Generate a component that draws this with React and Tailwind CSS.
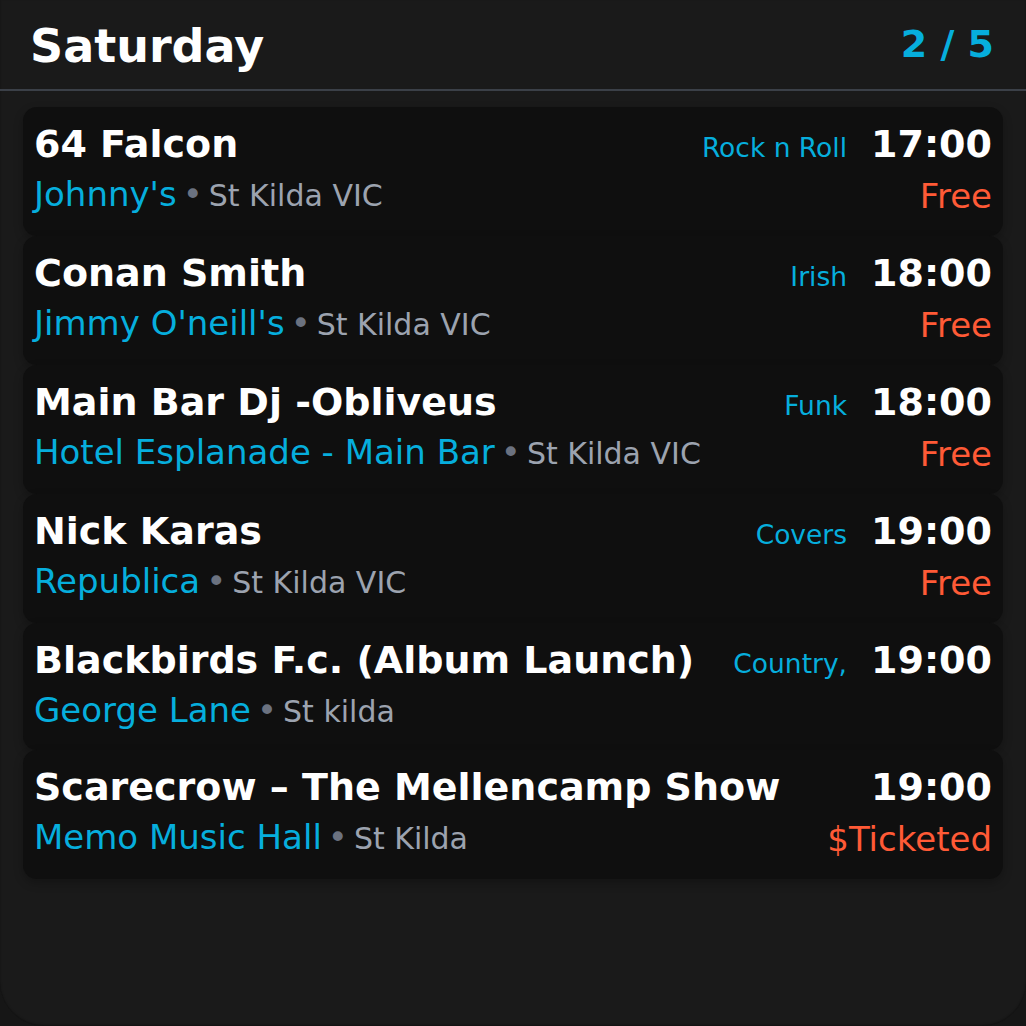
import React from 'react';

const gigs = [
  { title: '64 Falcon', venue: "Johnny's", suburb: 'St Kilda VIC', genre: 'Rock n Roll', time: '17:00', price: 'Free' },
  { title: 'Conan Smith', venue: "Jimmy O'neill's", suburb: 'St Kilda VIC', genre: 'Irish', time: '18:00', price: 'Free' },
  { title: 'Main Bar Dj -Obliveus', venue: 'Hotel Esplanade - Main Bar', suburb: 'St Kilda VIC', genre: 'Funk', time: '18:00', price: 'Free' },
  { title: 'Nick Karas', venue: 'Republica', suburb: 'St Kilda VIC', genre: 'Covers', time: '19:00', price: 'Free' },
  { title: 'Blackbirds F.c. (Album Launch)', venue: 'George Lane', suburb: 'St kilda', genre: 'Country,', time: '19:00' },
  { title: 'Scarecrow – The Mellencamp Show', venue: 'Memo Music Hall', suburb: 'St Kilda', time: '19:00', price: '$Ticketed' },
];

function GigCard({ gig }) {
  return (
    <div className="flex items-start justify-between bg-[#0f0f0f] rounded-[14px] pl-[11px] pr-[11px] pt-[18px] pb-[23px] shadow-[0_4px_10px_rgba(0,0,0,0.25)]">
      {/* Left */}
      <div className="min-w-0">
        <p className="text-[38px] leading-none font-bold text-white whitespace-nowrap">{gig.title}</p>
        <p className="mt-[14px] text-[34px] leading-none whitespace-nowrap">
          <span className="text-[#06aedd]">{gig.venue}</span>
          <span className="text-[#6b7280] ml-[6px] mr-[6px]">•</span>
          <span className="text-[30px] text-[#9ca3af]">{gig.suburb}</span>
        </p>
      </div>

      {/* Right */}
      <div className="flex flex-col items-end shrink-0">
        <div className="flex items-baseline gap-6">
          {gig.genre && <span className="text-[26.5px] leading-none text-[#06aedd]">{gig.genre}</span>}
          <span className="text-[38px] leading-none font-bold text-white">{gig.time}</span>
        </div>
        {gig.price && (
          <p className="mt-[16px] text-[34px] leading-none text-[#ff5a36] whitespace-nowrap">{gig.price}</p>
        )}
      </div>
    </div>
  );
}

export default function App() {
  return (
    <div className="w-[1026px] h-[1026px] bg-[#161616] font-['DejaVu_Sans',sans-serif] overflow-hidden">
      <div className="h-full bg-[#1a1a1a] rounded-b-[44px] shadow-[inset_0_-1px_2px_rgba(0,0,0,0.35)]">
        {/* Header */}
        <div className="flex items-start justify-between pl-[30px] pr-[32px] pt-[23px] pb-[20px] border-b-2 border-[#3b4048]">
          <h1 className="text-[46px] leading-none font-bold text-white">Saturday</h1>
          <span className="mt-[2px] text-[38px] leading-none font-bold text-[#06aedd]">2 / 5</span>
        </div>

        {/* List */}
        <div className="px-[23px] pt-[16px] flex flex-col">
          {gigs.map((gig, i) => (
            <GigCard key={i} gig={gig} />
          ))}
        </div>
      </div>
    </div>
  );
}
